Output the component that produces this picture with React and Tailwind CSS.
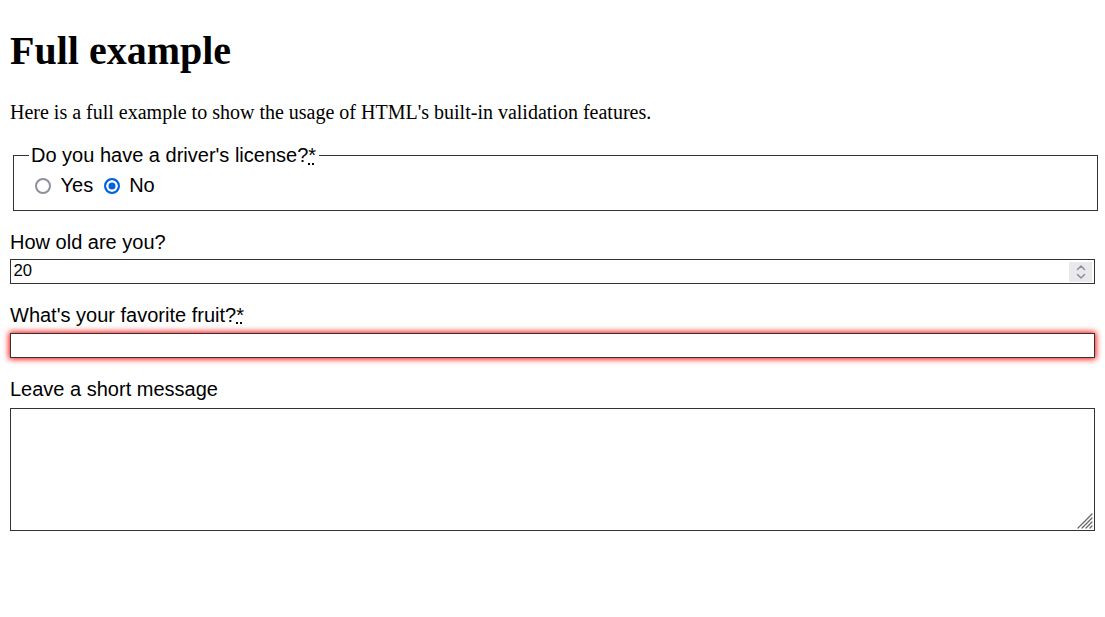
import React, { useState } from "react";

const sans = "font-['Liberation_Sans',Arial,sans-serif]";
const serif = "font-['Liberation_Serif','Times_New_Roman',serif]";

const radioCls =
  "h-[16px] w-[16px] appearance-none rounded-full border-2 border-[#8f8f9d] bg-white checked:border-[#0060df] checked:bg-[#0060df] checked:shadow-[inset_0_0_0_2.5px_white]";

const Required = () => (
  <abbr title="required" className="underline decoration-dotted">*</abbr>
);

export default function App() {
  const [license, setLicense] = useState("no");
  const [age, setAge] = useState("20");
  const [fruit, setFruit] = useState("");
  const [msg, setMsg] = useState("");

  return (
    <div className="min-h-screen bg-white px-[10px] pt-[28px] text-black">
      <h1 className={`${serif} text-[40px] font-bold leading-[46px]`}>Full example</h1>
      <p className={`${serif} mt-[27px] text-[20px] leading-[23px]`}>
        Here is a full example to show the usage of HTML's built-in validation features.
      </p>

      <form className={`${sans} mt-[20px] text-[20px] leading-[23px]`} onSubmit={(e) => e.preventDefault()}>
        {/* Radio group */}
        <fieldset className="ml-[2.5px] w-full border border-[#333] px-[15px] pt-[7px] pb-[12.5px]">
          <legend className="px-[2.5px] leading-[23px]">
            Do you have a driver's license?<Required />
          </legend>
          <div className="flex h-[23px] items-center">
            <input
              type="radio"
              id="r1"
              name="driver"
              checked={license === "yes"}
              onChange={() => setLicense("yes")}
              className={`ml-[6.5px] mr-[9.5px] ${radioCls}`}
            />
            <label htmlFor="r1">Yes</label>
            <input
              type="radio"
              id="r2"
              name="driver"
              checked={license === "no"}
              onChange={() => setLicense("no")}
              className={`ml-[11px] mr-[9px] ${radioCls}`}
            />
            <label htmlFor="r2">No</label>
          </div>
        </fieldset>

        {/* Age */}
        <div className="mt-[20px]">
          <label htmlFor="n1" className="block">How old are you?</label>
          <div className="relative mt-[5px]">
            <input
              type="number"
              id="n1"
              min="12"
              max="120"
              value={age}
              onChange={(e) => setAge(e.target.value)}
              className="block h-[25px] w-full border border-[#333] px-[2.5px] text-[16.67px] leading-[19px] outline-none [appearance:textfield] [&::-webkit-inner-spin-button]:appearance-none [&::-webkit-outer-spin-button]:appearance-none"
            />
            <div className="pointer-events-none absolute top-[3px] right-[3px] bottom-[2px] flex w-[23px] flex-col items-center justify-center bg-[#e9e9ed]">
              <svg width="10" height="16" viewBox="0 0 10 16" fill="none" stroke="#8d8d99" strokeWidth="1.5" strokeLinecap="round" strokeLinejoin="round">
                <path d="M1.5 5.5 5 2l3.5 3.5" />
                <path d="M1.5 10.5 5 14l3.5-3.5" />
              </svg>
            </div>
          </div>
        </div>

        {/* Fruit */}
        <div className="mt-[20px]">
          <label htmlFor="t1" className="block">What's your favorite fruit?<Required /></label>
          <input
            type="text"
            id="t1"
            value={fruit}
            onChange={(e) => setFruit(e.target.value)}
            className="mt-[6px] block h-[25px] w-full border border-[#333] px-[2.5px] text-[16.67px] shadow-[0_0_6px_1px_red] outline-none"
          />
        </div>

        {/* Message */}
        <div className="mt-[20px]">
          <label htmlFor="t2" className="block">Leave a short message</label>
          <div className="relative mt-[7px]">
            <textarea
              id="t2"
              maxLength={140}
              rows={5}
              value={msg}
              onChange={(e) => setMsg(e.target.value)}
              className="block h-[123px] w-full resize-none border border-[#333] px-[2.5px] text-[16.67px] outline-none"
            />
            {/* resize grip */}
            <svg
              className="pointer-events-none absolute right-[2px] bottom-[2px]"
              width="17"
              height="17"
              viewBox="0 0 17 17"
              stroke="#666"
              strokeWidth="1.3"
              strokeLinecap="round"
            >
              <path d="M16 2 2 16" strokeDasharray="2.5 1" />
              <path d="M16 6 6 16" strokeDasharray="2.5 1" />
              <path d="M16 10 10 16" strokeDasharray="2.5 1" />
              <path d="M16 14 14 16" />
            </svg>
          </div>
        </div>
      </form>
    </div>
  );
}
